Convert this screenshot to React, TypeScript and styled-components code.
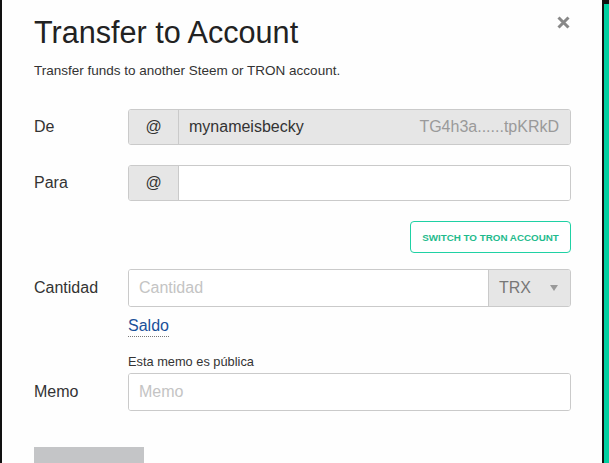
import React from 'react';
import styled, { createGlobalStyle } from 'styled-components';

const GlobalStyle = createGlobalStyle`
   body {
      margin: 0;
      background: #111;
      font-family: "Liberation Sans", Arial, sans-serif;
   }
`;

const Page = styled.div`
   display: flex;
   height: 463px;
   overflow: hidden;
   background: #111;
`;

const Modal = styled.div`
   position: relative;
   width: 600px;
   flex-shrink: 0;
   margin-left: 2px;
   padding: 13px 31px 0 32px;
   box-sizing: border-box;
   background: #fefefe;
   color: #333;
`;

const SideStrip = styled.div`
   flex: 1;
   margin: 4px 0 0 2px;
   background: #00cfa0;
`;

const CloseButton = styled.button`
   position: absolute;
   top: 16px;
   right: 32px;
   width: 13px;
   height: 13px;
   padding: 0;
   border: none;
   background: none;
   cursor: pointer;
`;

const Title = styled.h1`
   margin: 0;
   font-size: 30.6px;
   font-weight: normal;
   line-height: 38px;
   color: #222;
`;

const Subtitle = styled.p`
   margin: 10px 0 28px;
   font-size: 13.5px;
   line-height: 20px;
   color: #333;
`;

const Row = styled.div<{ $gap?: number }>`
   display: grid;
   grid-template-columns: 94px 1fr;
   align-items: start;
   margin-bottom: ${(p) => p.$gap ?? 20}px;
`;

const Label = styled.label<{ $h: number; $offset?: number }>`
   font-size: 16px;
   line-height: ${(p) => p.$h}px;
   margin-top: ${(p) => p.$offset ?? 0}px;
   color: #333;
`;

const Group = styled.div<{ $h: number }>`
   display: flex;
   align-self: stretch;
   height: ${(p) => p.$h}px;
   border: 1px solid #cacaca;
   border-radius: 3px;
   box-sizing: border-box;
   overflow: hidden;
   background: #fff;
`;

const Addon = styled.span`
   width: 49px;
   display: flex;
   align-items: center;
   justify-content: center;
   background: #e6e6e6;
   border-right: 1px solid #cacaca;
   font-size: 16px;
   color: #333;
`;

const Field = styled.div<{ $disabled?: boolean }>`
   flex: 1;
   display: flex;
   align-items: center;
   justify-content: space-between;
   padding: 0 11px 0 10px;
   background: ${(p) => (p.$disabled ? '#e6e6e6' : '#fff')};
   font-size: 16px;
   color: #333;
`;

const Placeholder = styled.span`
   color: #c4c4c4;
`;

const Address = styled.span`
   color: #9a9a9a;
`;

const Select = styled.div`
   width: 82px;
   display: flex;
   align-items: center;
   justify-content: space-between;
   padding: 0 12px 0 10px;
   box-sizing: border-box;
   background: #e6e6e6;
   border-left: 1px solid #cacaca;
   font-size: 16px;
   color: #777;
`;

const Caret = styled.span`
   width: 0;
   height: 0;
   border-left: 4.5px solid transparent;
   border-right: 4.5px solid transparent;
   border-top: 6px solid #999;
`;

const SwitchRow = styled.div`
   display: flex;
   justify-content: flex-end;
   margin-bottom: 16px;
`;

const SwitchButton = styled.button`
   height: 32px;
   width: 161px;
   padding: 0;
   border: 1px solid #1fd1a4;
   border-radius: 4px;
   background: #fff;
   color: #1fbb8d;
   font-family: inherit;
   font-size: 9.8px;
   font-weight: bold;
   text-transform: uppercase;
`;

const Column = styled.div`
   display: flex;
   flex-direction: column;
   align-items: flex-start;
`;

const Balance = styled.a`
   display: inline-block;
   margin-top: 8px;
   font-size: 16px;
   line-height: 21px;
   color: #1a5099;
   text-decoration: none;
   border-bottom: 1px dotted #777;
`;

const Note = styled.div`
   font-size: 12.8px;
   line-height: 22px;
   color: #333;
`;

const SubmitButton = styled.button`
   display: block;
   margin-top: 36px;
   width: 110px;
   height: 44px;
   border: none;
   background: #c4c5c7;
`;

const App: React.FC = () => {
   return (
      <Page>
         <GlobalStyle />
         <Modal>
            <CloseButton aria-label="Close">
               <svg width="13" height="13" viewBox="0 0 13 13">
                  <path d="M1.5 1.5 L11.5 11.5 M11.5 1.5 L1.5 11.5" stroke="#888" strokeWidth="3" />
               </svg>
            </CloseButton>
            <Title>Transfer to Account</Title>
            <Subtitle>Transfer funds to another Steem or TRON account.</Subtitle>

            <Row>
               <Label $h={36}>De</Label>
               <Group $h={36}>
                  <Addon>@</Addon>
                  <Field $disabled>
                     <span>mynameisbecky</span>
                     <Address>TG4h3a......tpKRkD</Address>
                  </Field>
               </Group>
            </Row>

            <Row>
               <Label $h={36}>Para</Label>
               <Group $h={36}>
                  <Addon>@</Addon>
                  <Field />
               </Group>
            </Row>

            <SwitchRow>
               <SwitchButton>Switch to TRON account</SwitchButton>
            </SwitchRow>

            <Row $gap={14}>
               <Label $h={38}>Cantidad</Label>
               <Column>
                  <Group $h={38}>
                     <Field>
                        <Placeholder>Cantidad</Placeholder>
                     </Field>
                     <Select>
                        TRX
                        <Caret />
                     </Select>
                  </Group>
                  <Balance href="#">Saldo</Balance>
               </Column>
            </Row>

            <Row $gap={0}>
               <Label $h={38} $offset={22}>Memo</Label>
               <Column>
                  <Note>Esta memo es pública</Note>
                  <Group $h={38}>
                     <Field>
                        <Placeholder>Memo</Placeholder>
                     </Field>
                  </Group>
               </Column>
            </Row>

            <SubmitButton aria-label="Siguiente" />
         </Modal>
         <SideStrip />
      </Page>
   );
};

export default App;
